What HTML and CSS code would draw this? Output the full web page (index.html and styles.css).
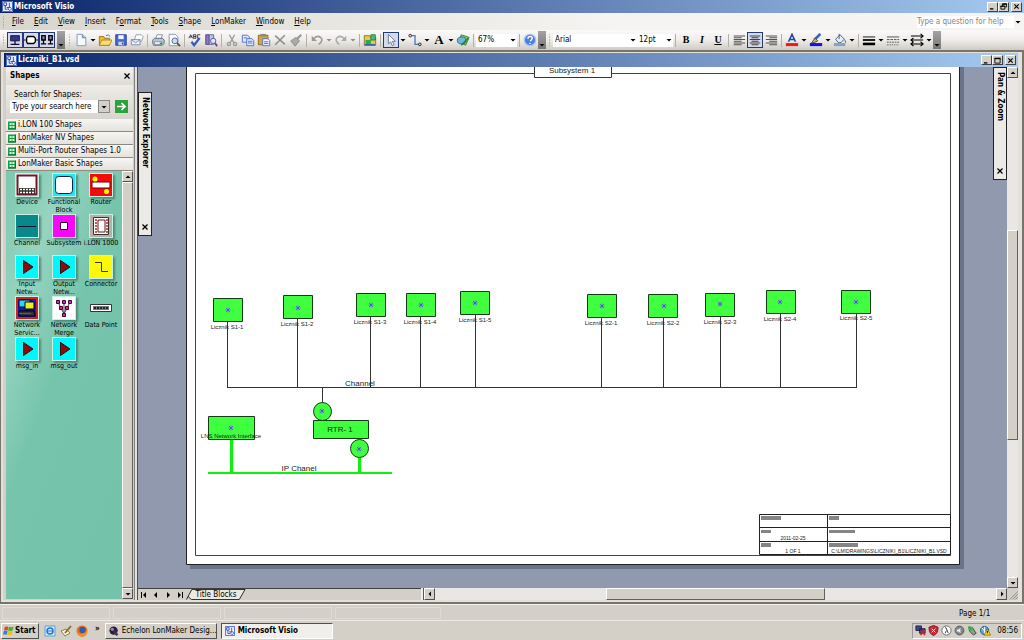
FILE: index.html
```html
<!DOCTYPE html>
<html lang="en">
<head>
<meta charset="utf-8">
<title>Microsoft Visio</title>
<link rel="stylesheet" href="styles.css">
</head>
<body>
<svg class="defs" aria-hidden="true">
  <symbol id="visio" viewBox="0 0 12 12"><rect width="12" height="12" fill="#fff"/><path d="M.5.5h11v11H.5z" fill="#e8eeff" stroke="#3458b8"/><path d="M2 2h3v3H2zM8 2v5H5M3.500 5v4H6M8.500 6.500l2 2-2 2-2-2z" fill="#fff" stroke="#1f3fae"/></symbol>
  <symbol id="down" viewBox="0 0 8 8"><path d="M1.500 3h5L4 5.500z" fill="#000"/></symbol>
  <symbol id="min" viewBox="0 0 8 8"><path d="M1 6h4v1.500H1z"/></symbol>
  <symbol id="max" viewBox="0 0 8 8"><path d="M1 1.500h6v5.500H1z" fill="none" stroke="#000"/><path d="M.5 1h7v1.500h-7z"/></symbol>
  <symbol id="restore" viewBox="0 0 8 8"><path d="M3 3V1h4.500v3.500H6M1 3.500h4.500V7H1z" fill="none" stroke="#000"/><path d="M2.500.5h5V2h-5zM.5 3h5v1.300h-5z"/></symbol>
  <symbol id="close" viewBox="0 0 8 8"><path d="M1.500 1.500l5 5M6.500 1.500l-5 5" fill="none" stroke="#000" stroke-width="1.300"/></symbol>
  <symbol id="stencil" viewBox="0 0 10 10"><rect width="10" height="10" fill="#16a044"/><path d="M2 2h2.500v2.500H2zM5.500 2H8v2.500H5.500zM2 5.500h2.500V8H2zM5.500 5.500H8V8H5.500z" fill="#d8ffe0"/><path d="M9.500 0v9.500H0" fill="none" stroke="#07602a"/></symbol>
  <symbol id="arrowblock" viewBox="0 0 22 22"><rect width="22" height="22" fill="#00f8fc"/><path d="M7.500 4v14M7.500 4.500l9.500 6.500-9.500 6.500z" fill="#900808" stroke="#201010"/></symbol>
  <symbol id="printer" viewBox="0 0 16 16"><path d="M5 7l2-5h6l-1.500 5z" fill="#fff" stroke="#7c8ca0"/><path d="M2 8l2-2h9l2 2v4l-2 2H3l-1-2z" fill="#b8c4d4" stroke="#53657c"/><path d="M4 10h8v3H4z" fill="#f8f8f8" stroke="#8090a0"/></symbol>
</svg>

<header class="titlebar">
  <svg class="appicon"><use href="#visio"/></svg>
  <h1>Microsoft Visio</h1>
  <div class="winbtns">
    <button aria-label="Minimize"><svg><use href="#min"/></svg></button><button aria-label="Restore"><svg><use href="#restore"/></svg></button><button class="apart" aria-label="Close"><svg><use href="#close"/></svg></button>
  </div>
</header>

<nav class="menubar">
  <span class="grip"></span>
  <button><u>F</u>ile</button><button><u>E</u>dit</button><button><u>V</u>iew</button><button><u>I</u>nsert</button><button>F<u>o</u>rmat</button><button><u>T</u>ools</button><button><u>S</u>hape</button><button><u>L</u>onMaker</button><button><u>W</u>indow</button><button><u>H</u>elp</button>
  <input class="ask" type="text" aria-label="Help question" placeholder="Type a question for help">
  <svg class="askarrow"><use href="#down"/></svg>
</nav>

<div class="toolbar">
  <span class="grip"></span>
  <button class="tool on" aria-label="Network"><svg viewBox="0 0 16 16"><path d="M3 3h10v6H3z" fill="#343487" stroke="#101040"/><path d="M8 9v4M3 13h10" stroke="#101030" stroke-width="1.500"/></svg></button>
  <button class="tool on" aria-label="Device"><svg viewBox="0 0 16 16"><path d="M4 4h7l2 2v4l-2 2H4l-1-2V6z" fill="#fff" stroke="#000" stroke-width="1.500"/><path d="M0 8h3M13 8h3" stroke="#000"/></svg></button>
  <button class="tool on" aria-label="Both"><svg viewBox="0 0 16 16"><path d="M2 3h4v5H2zM10 3h4v5h-4z" fill="#8088c0" stroke="#000" stroke-width="1.500"/><path d="M4 8v4M12 8v4M1 12.500h6M9 12.500h6" stroke="#000" stroke-width="1.500"/></svg></button>
  <span class="more first"><svg><use href="#down"/></svg></span>
  <span class="grip"></span>
  <button class="tool" aria-label="New"><svg viewBox="0 0 16 16"><path d="M3.500 1.500h6l4 4v9h-10z" fill="#f6faff" stroke="#7890b8"/><path d="M9.500 1.500v4h4" fill="#a8bce0" stroke="#6880b0"/></svg></button>
  <button class="drop" aria-label="New options"><svg><use href="#down"/></svg></button>
  <button class="tool" aria-label="Open"><svg viewBox="0 0 16 16"><path d="M1.500 14V4h5l1 2H13v8z" fill="#f0b838" stroke="#a07010"/><path d="M1.500 14l3-6H16l-3 6z" fill="#ffe070" stroke="#b08018"/><path d="M9 3q3-2 5 1" fill="none" stroke="#5070a0"/></svg></button>
  <button class="tool" aria-label="Save"><svg viewBox="0 0 16 16"><path d="M2 2h12v12H2z" fill="#4668d0" stroke="#233c98"/><path d="M5 2.500h6V7H5z" fill="#f4f7ff"/><path d="M5 10h6v4H5z" fill="#c8d4f4"/><path d="M9 11h1.500v2H9z" fill="#233c98"/></svg></button>
  <button class="tool" aria-label="Mail"><svg viewBox="0 0 16 16"><path d="M5 8l2-6h6l2 2-2 6z" fill="#fff" stroke="#8898b0"/><path d="M1.500 7.500h10v6h-10z" fill="#e8eefa" stroke="#7888a8"/><path d="M1.500 7.500l5 3.500 5-3.500" fill="none" stroke="#7888a8"/></svg></button>
  <span class="sep"></span>
  <button class="tool" aria-label="Print"><svg viewBox="0 0 16 16"><use href="#printer"/><path d="M10 11h3v2h-3z" fill="#30a048"/></svg></button>
  <button class="tool" aria-label="Print preview"><svg viewBox="0 0 16 16"><path d="M2.500 1.500h7l3 3v10h-10z" fill="#fff" stroke="#7890b8"/><circle cx="9" cy="9" r="3.300" fill="#c8e0ff" stroke="#506080"/><path d="M11.500 11.500L15 15" stroke="#705020" stroke-width="2"/></svg></button>
  <span class="sep"></span>
  <button class="tool" aria-label="Spelling"><svg viewBox="0 0 16 16"><path d="M1 6l2-4 2 4M2 4.500h2M6 2v4h3V2H6M6 4h3M14 2h-3v4h3" fill="none" stroke="#303030"/><path d="M4 10l3 4 6-8" fill="none" stroke="#3458c8" stroke-width="2.500"/></svg></button>
  <button class="tool" aria-label="Research"><svg viewBox="0 0 16 16"><path d="M2 2h4v11H2z" fill="#8a78c0" stroke="#504080"/><path d="M6 2h5v11H6z" fill="#b8c8e8" stroke="#506090"/><circle cx="10.500" cy="9" r="3" fill="#dceaff" stroke="#604888"/><path d="M12.500 11.500L15 15" stroke="#604888" stroke-width="2"/></svg></button>
  <span class="sep"></span>
  <button class="tool" aria-label="Cut"><svg viewBox="0 0 16 16" fill="none" stroke="#9a9a9a" stroke-width="1.500"><path d="M5 2l5 9M11 2L6 11"/><circle cx="4.500" cy="12.500" r="1.800"/><circle cx="11.500" cy="12.500" r="1.800"/></svg></button>
  <button class="tool" aria-label="Copy"><svg viewBox="0 0 16 16" fill="#e0eaff" stroke="#4a6cc0"><path d="M1.500 2.500h6l2 2v6h-8z"/><path d="M6.500 6.500h6l2 2v6h-8z"/><path d="M8 9.500h5M8 11.500h5M3 5.500h4"/></svg></button>
  <button class="tool" aria-label="Paste"><svg viewBox="0 0 16 16"><path d="M1.500 2.500h11v11h-11z" fill="#d8a438" stroke="#8a6418"/><path d="M4 1h6v3H4z" fill="#888"/><path d="M6.500 6.500h6l2 2v6h-8z" fill="#eef4ff" stroke="#4a6cc0"/><path d="M8 10h5M8 12h5" stroke="#4a6cc0"/></svg></button>
  <button class="tool" aria-label="Delete"><svg viewBox="0 0 16 16"><path d="M2.500 3l11 10M13.500 2.500l-11 11" stroke="#8c8c8c" stroke-width="1.700"/></svg></button>
  <button class="tool" aria-label="Format painter"><svg viewBox="0 0 16 16"><path d="M14 2l-5 5" stroke="#999" stroke-width="2.500"/><path d="M2 9l6-4 4 4-5 6z" fill="#aaa" stroke="#888"/></svg></button>
  <span class="sep"></span>
  <button class="tool" aria-label="Undo"><svg viewBox="0 0 16 16"><path d="M4 7q4-5 8-2t-2 8" fill="none" stroke="#999" stroke-width="1.800"/><path d="M2 3v6h6z" fill="#999"/></svg></button>
  <button class="drop dim" aria-label="Undo list"><svg><use href="#down"/></svg></button>
  <button class="tool" aria-label="Redo"><svg viewBox="0 0 16 16"><path d="M12 7Q8 2 4 5t2 8" fill="none" stroke="#aaa" stroke-width="1.800"/><path d="M14 3v6H8z" fill="#aaa"/></svg></button>
  <button class="drop dim" aria-label="Redo list"><svg><use href="#down"/></svg></button>
  <span class="sep"></span>
  <button class="tool" aria-label="Shapes"><svg viewBox="0 0 16 16"><path d="M1.500 3h6l1 2h6v9h-13z" fill="#e8c850" stroke="#8a7020"/><path d="M3 8h6v5H3z" fill="#30a850"/><path d="M9 2h5v6H9z" fill="#50c070" stroke="#207838"/><path d="M2 12.500h12v2H2z" fill="#3868b0"/></svg></button>
  <span class="sep"></span>
  <button class="tool on" aria-label="Pointer"><svg viewBox="0 0 16 16"><path d="M5 1.500v11l2.500-2.500 2 4.500 2-1-2-4H13z" fill="#fff" stroke="#607090"/></svg></button>
  <button class="drop" aria-label="Pointer options"><svg><use href="#down"/></svg></button>
  <button class="tool" aria-label="Connector"><svg viewBox="0 0 16 16" fill="none"><path d="M4 3h4v10h4" stroke="#4878c0" stroke-width="1.500"/><circle cx="2.500" cy="3" r="1.500" stroke="#111"/><circle cx="13.500" cy="13" r="1.500" stroke="#111"/></svg></button>
  <button class="drop" aria-label="Connector options"><svg><use href="#down"/></svg></button>
  <button class="tool big" aria-label="Text tool">A</button>
  <button class="drop" aria-label="Text options"><svg><use href="#down"/></svg></button>
  <button class="tool" aria-label="Drawing tools"><svg viewBox="0 0 16 16"><path d="M6 2l9 3-4 9-8-4z" fill="#80d060" stroke="#308030"/><ellipse cx="6.500" cy="8.500" rx="5" ry="4" fill="#70b8d8" stroke="#2868a0"/><path d="M6 14l8-8" stroke="#208838" stroke-width="2"/></svg></button>
  <span class="sep"></span>
  <span class="combo zoom"><select aria-label="Zoom"><option>67%</option></select><svg><use href="#down"/></svg></span>
  <span class="sep"></span>
  <button class="tool" aria-label="Help"><svg viewBox="0 0 16 16"><circle cx="8" cy="8" r="6.500" fill="#4a7ee0" stroke="#a8c4f4" stroke-width="1.500"/><path d="M5.700 6.500q0-2.500 2.500-2.500t2.300 2-2.500 3M8 11v1.500" fill="none" stroke="#fff" stroke-width="1.700"/></svg></button>
  <span class="more"><svg><use href="#down"/></svg></span>
  <span class="grip"></span>
  <span class="combo font"><select aria-label="Font"><option>Arial</option></select><svg><use href="#down"/></svg></span>
  <span class="combo size"><select aria-label="Font size"><option>12pt</option></select><svg><use href="#down"/></svg></span>
  <span class="sep"></span>
  <button class="tool serif">B</button>
  <button class="tool serif italic">I</button>
  <button class="tool serif under">U</button>
  <span class="sep"></span>
  <button class="tool" aria-label="Align left"><svg viewBox="0 0 16 16"><path d="M2 3.500h13M2 5.500h9M2 7.500h13M2 9.500h9M2 11.500h13M2 13.500h9" stroke="#555" stroke-width="1.200"/></svg></button>
  <button class="tool on" aria-label="Center"><svg viewBox="0 0 16 16"><path d="M2 3.500h12M4 5.500h8M2 7.500h12M4 9.500h8M2 11.500h12M4 13.500h8" stroke="#444" stroke-width="1.200"/></svg></button>
  <button class="tool" aria-label="Align right"><svg viewBox="0 0 16 16"><path d="M2 3.500h13M6 5.500h9M2 7.500h13M6 9.500h9M2 11.500h13M6 13.500h9" stroke="#555" stroke-width="1.200"/></svg></button>
  <span class="sep"></span>
  <button class="tool" aria-label="Text color"><svg viewBox="0 0 16 16"><path d="M4 10l4-8.500L12 10M5.500 7.500h5" fill="none" stroke="#24489c" stroke-width="1.800"/><path d="M1 11.500h14V15H1z" fill="#f01818"/></svg></button>
  <button class="drop" aria-label="Text colors"><svg><use href="#down"/></svg></button>
  <button class="tool" aria-label="Line color"><svg viewBox="0 0 16 16"><path d="M13 1L6 8" stroke="#3b62b8" stroke-width="3"/><path d="M7 6l3 3-4 2H3z" fill="#d8b060" stroke="#445"/><path d="M1 11.500h14V15H1z" fill="#1010f0"/></svg></button>
  <button class="drop" aria-label="Line colors"><svg><use href="#down"/></svg></button>
  <button class="tool" aria-label="Fill color"><svg viewBox="0 0 16 16"><path d="M3 7l5-5 5 5-4 4H6z" fill="#e8eef8" stroke="#405078"/><path d="M7 1v6" stroke="#405078"/><path d="M13 7q3 2 1 5z" fill="#3868c0"/><path d="M1 11.500h13V15H1z" fill="#88a0c4"/></svg></button>
  <button class="drop" aria-label="Fill colors"><svg><use href="#down"/></svg></button>
  <span class="sep"></span>
  <button class="tool" aria-label="Line weight"><svg viewBox="0 0 16 16"><path d="M1 4.500h14" stroke="#000"/><path d="M1 8h14" stroke="#000" stroke-width="2"/><path d="M1 12.500h14" stroke="#000" stroke-width="3"/></svg></button>
  <button class="drop" aria-label="Line weights"><svg><use href="#down"/></svg></button>
  <button class="tool" aria-label="Line pattern"><svg viewBox="0 0 16 16" stroke="#444"><path d="M1 4.500h14"/><path d="M1 7.500h14" stroke-dasharray="3 1"/><path d="M1 10.500h14" stroke-dasharray="2 1"/><path d="M1 13.500h14" stroke-dasharray="1 1"/></svg></button>
  <button class="drop" aria-label="Line patterns"><svg><use href="#down"/></svg></button>
  <button class="tool" aria-label="Line ends"><svg viewBox="0 0 16 16" fill="none" stroke="#000" stroke-width="1.200"><path d="M1 3.500h14M12 1l3 2.500L12 6M1 8h14M4 5.500L1 8l3 2.500M1 12.500h14M12 10l3 2.500-3 2.500M4 10l-3 2.500L4 15"/></svg></button>
  <button class="drop" aria-label="Line end options"><svg><use href="#down"/></svg></button>
  <span class="more"><svg><use href="#down"/></svg></span>
</div>

<section class="mdi">
  <header class="titlebar doc">
    <svg class="appicon"><use href="#visio"/></svg>
    <h2>Liczniki_B1.vsd</h2>
    <div class="winbtns">
      <button aria-label="Minimize document"><svg><use href="#min"/></svg></button><button aria-label="Maximize document"><svg><use href="#max"/></svg></button><button class="apart" aria-label="Close document"><svg><use href="#close"/></svg></button>
    </div>
  </header>
  <div class="work">
    <aside class="shapes">
      <div class="panelhead"><h3>Shapes</h3><button aria-label="Close shapes"><svg><use href="#close"/></svg></button></div>
      <div class="search">
        <label for="q">Search for Shapes:</label>
        <div class="searchrow">
          <input id="q" type="text" value="Type your search here">
          <button class="raised" aria-label="Recent searches"><svg><use href="#down"/></svg></button>
          <button class="go" aria-label="Search"><svg viewBox="0 0 13 13"><path d="M2 6.500h8M6.500 3L10 6.500 6.500 10" fill="none" stroke="#fff" stroke-width="1.700"/></svg></button>
        </div>
      </div>
      <button class="stencil"><svg><use href="#stencil"/></svg>i.LON 100 Shapes</button>
      <button class="stencil"><svg><use href="#stencil"/></svg>LonMaker NV Shapes</button>
      <button class="stencil"><svg><use href="#stencil"/></svg>Multi-Port Router Shapes 1.0</button>
      <button class="stencil"><svg><use href="#stencil"/></svg>LonMaker Basic Shapes</button>
      <div class="palette">
        <div class="masters">
          <figure><svg viewBox="0 0 22 22"><rect width="22" height="22" fill="#fff"/><path d="M1.500 1.500h19v19h-19z" fill="#fff" stroke="#701828" stroke-width="2"/><path d="M3 14h16v6H3z" fill="#333"/><path d="M4 15.500h14M4 18.500h14" stroke="#fff" stroke-width="1.500" stroke-dasharray="2 1"/></svg><figcaption>Device</figcaption></figure>
          <figure><svg viewBox="0 0 22 22"><rect width="22" height="22" fill="#20e8f0"/><rect x="2.500" y="2.500" width="17" height="17" rx="3" fill="#fff" stroke="#102040"/></svg><figcaption>Functional Block</figcaption></figure>
          <figure><svg viewBox="0 0 22 22"><rect width="22" height="22" fill="#f80808"/><path d="M2 8h18v6H2z" fill="#fff" stroke="#600"/><circle cx="5" cy="5" r="2.500" fill="#ff0"/><circle cx="16.500" cy="17.500" r="2.500" fill="#ff0"/></svg><figcaption>Router</figcaption></figure>
          <figure><svg viewBox="0 0 22 22"><rect width="22" height="22" fill="#088888"/><path d="M2 11.500h18" stroke="#013"/></svg><figcaption>Channel</figcaption></figure>
          <figure><svg viewBox="0 0 22 22"><rect width="22" height="22" fill="#f808f8"/><path d="M7.500 7.500h7v7h-7z" fill="#fff" stroke="#202"/></svg><figcaption>Subsystem</figcaption></figure>
          <figure><svg viewBox="0 0 22 22"><rect width="22" height="22" fill="#b8b0a4"/><path d="M3.500 2.500h15v17h-15z" fill="#fff" stroke="#333"/><path d="M6 4v14M17 4v14" stroke="#c02020" stroke-dasharray="2 1" stroke-width="1.500"/><path d="M8 5h7v12H8z" fill="#fff" stroke="#502020"/></svg><figcaption>i.LON 1000</figcaption></figure>
          <figure><svg><use href="#arrowblock"/></svg><figcaption>Input Netw...</figcaption></figure>
          <figure><svg><use href="#arrowblock"/></svg><figcaption>Output Netw...</figcaption></figure>
          <figure><svg viewBox="0 0 22 22"><rect width="22" height="22" fill="#fcf808"/><path d="M5 6.500h6.500v9H18" fill="none" stroke="#332"/></svg><figcaption>Connector</figcaption></figure>
          <figure><svg viewBox="0 0 22 22"><path d="M1 1h20v20H1z" fill="#1818a0" stroke="#d02020" stroke-width="2"/><path d="M3 3h11v7H3z" fill="#28d8e8" stroke="#003"/><path d="M9 5h9v7H9z" fill="#e8f020" stroke="#003"/><path d="M3 14h15l1 5H3z" fill="#333" stroke="#000"/><path d="M3 16.500h12" stroke="#c03030"/></svg><figcaption>Network Servic...</figcaption></figure>
          <figure><svg viewBox="0 0 22 22"><rect width="22" height="22" fill="#fff"/><path d="M5 5l6 12 6-12M11 5v12" stroke="#333" fill="none"/><g fill="#d020d0" stroke="#402"><path d="M3.500 3.500h3v3h-3zM9.500 3.500h3v3h-3zM15.500 3.500h3v3h-3zM6.500 9.500h3v3h-3zM12.500 9.500h3v3h-3zM9.500 16.500h3v3h-3z"/></g></svg><figcaption>Network Merge</figcaption></figure>
          <figure><svg viewBox="0 0 22 22" class="flat"><path d="M.5 7.500h21v7H.5z" fill="#fff" stroke="#333"/><path d="M3 9h16v4H3z" fill="#777"/><path d="M4 11h14" stroke="#222" stroke-width="2" stroke-dasharray="2 1"/></svg><figcaption>Data Point</figcaption></figure>
          <figure><svg><use href="#arrowblock"/></svg><figcaption>msg_in</figcaption></figure>
          <figure><svg><use href="#arrowblock"/></svg><figcaption>msg_out</figcaption></figure>
        </div>
        <div class="vscroll"><button class="raised" aria-label="Scroll shapes up"><svg class="up"><use href="#down"/></svg></button><span class="thumb"></span><button class="raised" aria-label="Scroll shapes down"><svg><use href="#down"/></svg></button></div>
      </div>
    </aside>

    <main class="drawing">
      <div class="viewrow">
        <div class="canvas">
          <svg class="page" width="869" height="521" viewBox="138 67 869 521">
            <path d="M190 67h774v502H190z" fill="#697389"/>
            <path d="M186 67h773v497H186z" fill="#fff"/>
            <path d="M186.500 67v497.500h773V67" fill="none" stroke="#222"/>
            <path d="M195.500 73.500h755v482h-755z" fill="none" stroke="#444"/>
            <path d="M534.500 60h77v17.500h-77z" fill="#fff" stroke="#333"/>
            <text x="572" y="73" class="t8">Subsystem 1</text>
            <g fill="none" stroke="#333">
              <path d="M227.500 321v67M297.500 318v70M370.500 315.500v72.500M420.500 315.500v72.500M475.500 314v74M601.500 317v71M663.500 317v71M720.500 315v73M780.500 313v75M856.500 313v75M227 387.500h630M322.500 388v15"/>
            </g>
            <path d="M231.500 439v34M359.500 457v16" stroke="#0df20d" stroke-width="3"/>
            <path d="M208 473h184" stroke="#0df20d" stroke-width="2"/>
            <g fill="#3fff3f" stroke="#143c14">
              <path d="M213.500 298.500h29v23h-29zM283.500 295.500h29v23h-29zM356.500 293.500h29v23h-29zM406.500 293.500h29v23h-29zM460.500 291.500h29v23h-29zM587.500 294.500h29v23h-29zM648.500 294.500h29v23h-29zM705.500 293.500h29v23h-29zM766.500 290.500h29v23h-29zM841.500 290.500h29v23h-29zM208.500 416.500h46v23h-46zM313.500 420.500h55v18h-55z"/>
              <circle cx="322.500" cy="411.500" r="9"/><circle cx="359.500" cy="448.500" r="9"/>
            </g>
            <defs><g id="pt"><circle r="2" fill="#8fd0c8" stroke="#5878d0" stroke-width=".7"/><path d="M-1.500-1.500l3 3M1.500-1.500l-3 3" stroke="#2848b0" stroke-width=".8"/></g></defs>
            <use href="#pt" x="228" y="310"/><use href="#pt" x="298" y="308"/><use href="#pt" x="371" y="305"/><use href="#pt" x="421" y="305"/><use href="#pt" x="475" y="303"/><use href="#pt" x="602" y="306"/><use href="#pt" x="664" y="306"/><use href="#pt" x="720" y="304"/><use href="#pt" x="780" y="302"/><use href="#pt" x="856" y="302"/><use href="#pt" x="231" y="428"/><use href="#pt" x="322" y="411"/><use href="#pt" x="359" y="449"/>
            <g class="t6">
              <text x="227" y="329">Licznik S1-1</text><text x="297" y="326">Licznik S1-2</text><text x="370" y="324">Licznik S1-3</text><text x="420" y="324">Licznik S1-4</text><text x="475" y="322">Licznik S1-5</text>
              <text x="601" y="325">Licznik S2-1</text><text x="663" y="325">Licznik S2-2</text><text x="720" y="324">Licznik S2-3</text><text x="780" y="321">Licznik S2-4</text><text x="856" y="320">Licznik S2-5</text>
              <text x="231" y="438">LNS Network Interface</text>
            </g>
            <text x="360" y="386" class="t8">Channel</text><text x="340" y="432" class="t8">RTR- 1</text><text x="299" y="471" class="t8">IP Chanel</text>
            <path d="M759.500 514.500h191v40h-191zM759.500 527.500h191M759.500 541.500h191M827.500 514.500v40" fill="none" stroke="#222"/>
            <path d="M761 516h20v4h-20zM829 516h10v4h-10zM761 530h10v3h-10zM829 530h26v3h-26zM761 543h10v4h-10zM829 543h29v4h-29z" fill="#858585"/>
            <g class="t5"><text x="793" y="540">2011-02-25</text><text x="793" y="553">1 OF 1</text><text x="889" y="553">C:\LM\DRAWINGS\LICZNIKI_B1\LICZNIKI_B1.VSD</text></g>
          </svg>
          <div class="dock left"><span>Network Explorer</span><button aria-label="Close Network Explorer"><svg><use href="#close"/></svg></button></div>
          <div class="dock right"><span>Pan &amp; Zoom</span><button aria-label="Close Pan and Zoom"><svg><use href="#close"/></svg></button></div>
        </div>
        <div class="vscroll page-v"><button class="raised" aria-label="Scroll up"><svg class="up"><use href="#down"/></svg></button><span class="thumb"></span><button class="raised" aria-label="Scroll down"><svg><use href="#down"/></svg></button></div>
      </div>
      <div class="tabrow">
        <div class="tabs">
          <button aria-label="First page"><svg viewBox="0 0 8 8"><path d="M1 1h1v6H1zM6 1v6L3 4z"/></svg></button>
          <button aria-label="Previous page"><svg viewBox="0 0 8 8"><path d="M5 1v6L2 4z"/></svg></button>
          <button aria-label="Next page"><svg viewBox="0 0 8 8"><path d="M3 1v6l3-3z"/></svg></button>
          <button aria-label="Last page"><svg viewBox="0 0 8 8"><path d="M2 1v6l3-3zM6 1h1v6H6z"/></svg></button>
          <button class="tab"><svg viewBox="0 0 62 12" preserveAspectRatio="none"><path d="M.5 11.500L6 .5h55l-6 11H5.500L2 8" fill="#ece9e3" stroke="#222"/></svg><span>Title Blocks</span></button>
        </div>
        <span class="splitter"></span>
        <div class="hscroll"><button class="raised" aria-label="Scroll left"><svg viewBox="0 0 8 8"><path d="M5 1.500v5L2.500 4z"/></svg></button><span class="thumb"></span><button class="raised" aria-label="Scroll right"><svg viewBox="0 0 8 8"><path d="M3 1.500v5L5.500 4z"/></svg></button></div>
        <svg class="sizer" viewBox="0 0 12 12"><path d="M3 12l9-9M6 12l6-6M9 12l3-3" stroke="#888"/></svg>
      </div>
    </main>
  </div>
</section>

<div class="status"><span></span><span></span><span></span><span class="rest"></span><output>Page 1/1</output></div>

<footer class="taskbar">
  <button class="start raised"><svg viewBox="0 0 12 12"><path d="M2 2q2-1 4 0L5 6Q3 5 1 6z" fill="#e84820"/><path d="M6.500 2q2 1 5 0l-1 4q-3 1-5 0z" fill="#48b030"/><path d="M1 6.500q2-1 4 0l-1 4q-2-1-4 0z" fill="#3878e0"/><path d="M5.500 6.500q2 1 5 0l-1 4q-3 1-5 0z" fill="#f0c010"/></svg>Start</button>
  <div class="quick">
    <button aria-label="Internet Explorer"><svg viewBox="0 0 12 12"><path d="M1 1h10v10H1z" fill="#d4ecff" stroke="#60a0d8"/><circle cx="6" cy="6" r="3" fill="none" stroke="#2878c8" stroke-width="1.600"/><path d="M3 6h6" stroke="#2878c8"/></svg></button>
    <button aria-label="Show desktop"><svg viewBox="0 0 12 12"><path d="M1 6l5-2 4 4-5 3z" fill="#f8f4d0" stroke="#908040"/><path d="M11 1L5 8" stroke="#806820" stroke-width="1.700"/></svg></button>
    <button aria-label="Firefox"><svg viewBox="0 0 12 12"><circle cx="6" cy="6" r="5.500" fill="#e07018"/><circle cx="6.500" cy="5" r="3.200" fill="#3858b0"/><path d="M1 3q0 6 5 6 4-1 5-5 1 7-5 8Q0 11 1 3z" fill="#f09020"/></svg></button>
  </div>
  <span class="chev">»</span>
  <button class="task raised"><svg viewBox="0 0 12 12"><circle cx="5.500" cy="5.500" r="5" fill="#282038"/><circle cx="4" cy="4" r="2" fill="#a080c0"/><path d="M6 6l4 5" stroke="#403060" stroke-width="3"/></svg>Echelon LonMaker Desig...</button>
  <button class="task active"><svg><use href="#visio"/></svg>Microsoft Visio</button>
  <div class="tray">
    <svg viewBox="0 0 12 12"><path d="M1 1h6v5H1zM5 4h6v5H5z" fill="#3848a0" stroke="#223"/><path d="M6 6l5 5M11 6l-5 5" stroke="#e02020" stroke-width="1.600"/></svg>
    <svg viewBox="0 0 12 12"><path d="M6 .5l5 2q0 7-5 9-5-2-5-9z" fill="#d02838" stroke="#801020"/><path d="M4 4l4 4M8 4L4 8" stroke="#fff"/></svg>
    <svg viewBox="0 0 12 12"><circle cx="6" cy="6" r="5" fill="#fff" stroke="#666"/><path d="M4.500 3h1l2.500 6M6 6L4.500 9" fill="none" stroke="#333"/></svg>
    <svg viewBox="0 0 12 12"><circle cx="6" cy="6" r="4.800" fill="#808890" stroke="#555"/><path d="M3 5h2l2-2v6L5 7H3z" fill="#eee"/></svg>
    <svg viewBox="0 0 12 12"><path d="M2 2l4 1 4 6-3 2-4-4z" fill="#90a090" stroke="#444"/><path d="M1 2h5v4H2z" fill="#30b840"/></svg>
    <svg viewBox="0 0 12 12"><circle cx="5" cy="6" r="4.500" fill="#60a8d8" stroke="#205890"/><path d="M2 3l5 6M5 2v8" stroke="#fff"/><path d="M8 4l3.500 7h-7z" fill="#f8e020" stroke="#665500" stroke-width=".7"/><path d="M8 6.500V9" stroke="#000"/></svg>
    <time>08:56</time>
  </div>
</footer>
</body>
</html>
```
FILE: styles.css
```css
* { box-sizing: border-box; }
body {
  margin: 0; height: 100vh; display: flex; flex-direction: column; overflow: hidden;
  background: #d4d0c8; color: #000;
  font: 8px/10px "DejaVu Sans Condensed", "DejaVu Sans", sans-serif;
}
button, input, select { font: inherit; color: inherit; margin: 0; padding: 0; border: 0; border-radius: 0; background: none; }
h1, h2, h3, figure { margin: 0; font-size: inherit; }
svg { display: block; flex: none; }
.defs { position: absolute; width: 0; height: 0; }

.titlebar { flex: none; height: 13px; display: flex; align-items: center; gap: 1px; padding: 0 2px; color: #fff; background: linear-gradient(to right, #0a246a, #a6caf0); }
.titlebar h1, .titlebar h2 { flex: 1; font-weight: bold; }
.appicon { width: 11px; height: 11px; }
.winbtns { display: flex; }
.winbtns button { width: 11px; height: 10px; display: grid; place-items: center; background: #d4d0c8; border: 1px solid; border-color: #fff #404040 #404040 #fff; }
.winbtns svg { width: 7px; height: 7px; }
.winbtns .apart { margin-left: 2px; }

.menubar { flex: none; height: 17px; display: flex; align-items: center; background: linear-gradient(to right, #d8d5cd, #f5f4f2 60%); padding-right: 2px; }
.menubar button { padding: 0 5px; }
.grip { width: 7px; height: 12px; flex: none; background: radial-gradient(circle, #8d8a80 1px, transparent 1px) center / 3px 3px repeat-y; }
.ask { margin-left: auto; width: 97px; height: 12px; background: #fff; padding: 0; }
.ask::placeholder { color: #858585; opacity: 1; }
.askarrow { width: 8px; height: 8px; }

.toolbar { flex: none; height: 20px; display: flex; align-items: center; background: linear-gradient(#fbfaf9, #efedea 50%, #cfcbc3); }
.tool { width: 16px; height: 16px; flex: none; display: grid; place-items: center; }
.tool svg { width: 14px; height: 14px; }
.tool.on { border: 1px solid #26387c; background: #d6daea; }
.tool.serif, .tool.big { font: bold 10px/12px "Liberation Serif", serif; }
.tool.big { font-size: 13px; }
.tool.italic { font-style: italic; }
.tool.under { text-decoration: underline; }
.drop { width: 8px; height: 16px; flex: none; }
.drop svg, .more svg { width: 8px; height: 8px; }
.dim { opacity: .4; }
.sep { width: 5px; height: 13px; flex: none; background: linear-gradient(#b3b0a8, #b3b0a8) center / 1px 100% no-repeat; }
.more { width: 8px; height: 18px; flex: none; display: flex; align-items: flex-end; background: linear-gradient(#a3a3a3, #777); }
.more.first { margin: 0 1px 0 2px; }
.combo { display: flex; align-items: center; height: 13px; background: #fff; flex: none; }
.combo select { flex: 1; min-width: 0; height: 13px; appearance: none; padding-left: 2px; }
.combo svg { width: 8px; height: 8px; }
.zoom { width: 41px; }
.font { width: 84px; }
.size { width: 36px; }

.mdi { flex: 1; min-height: 0; display: flex; flex-direction: column; padding: 1px 4px 2px 2px; border: solid #77746c; border-width: 2px 2px 2px 1px; background: #e4e1da; }
.doc { height: 14px; margin-left: 1px; }
.work { flex: 1; min-height: 0; display: flex; gap: 2px; }
.raised { display: grid; place-items: center; background: #d4d0c8; border: 1px solid; border-color: #fff #505050 #505050 #fff; }
.raised svg { width: 8px; height: 8px; }

.shapes { width: 132px; flex: none; display: flex; flex-direction: column; padding: 0 1px 1px 3px; background: #d4d0c8; border-right: 1px solid #808080; }
.panelhead { height: 18px; flex: none; display: flex; align-items: center; justify-content: space-between; padding: 0 2px 0 4px; background: linear-gradient(#f3f1ee, #dedbd5); }
.panelhead svg { width: 8px; height: 8px; }
.search { height: 34px; flex: none; padding: 5px 5px 0 4px; background: linear-gradient(#eeece8, #d8d5ce); }
.search label { display: block; padding-left: 4px; }
.searchrow { display: flex; align-items: center; }
.searchrow input { flex: 1; min-width: 0; height: 13px; background: #fff; padding: 0 2px; }
.searchrow .raised { width: 12px; height: 13px; border-color: #888; }
.go { width: 13px; height: 13px; margin-left: 5px; background: #2ca33a; }
.stencil { height: 13px; flex: none; display: flex; align-items: center; gap: 2px; padding: 0 2px; text-align: left; white-space: nowrap; background: linear-gradient(#f7f6f4, #e4e2dc); border-bottom: 1px solid #8c8981; }
.stencil svg { width: 8px; height: 9px; }
.palette { flex: 1; min-height: 0; display: flex; }
.masters { flex: 1; display: grid; grid-template-columns: repeat(3, 37px); grid-auto-rows: 41px; align-content: start; justify-content: center; padding-top: 2px; background: linear-gradient(110deg, #7cc8b0, #96d4c0 22%, #76c4ac 45%, #74c2aa); }
figure { display: flex; flex-direction: column; align-items: center; gap: 1px; }
figure svg { width: 24px; height: 24px; border: 1px solid #c8f0e4; box-shadow: 2px 2px 2px #4f8c7a; }
figure .flat { border-color: transparent; box-shadow: none; }
figcaption { font-size: 7px; line-height: 8px; text-align: center; }
.vscroll { width: 11px; flex: none; display: flex; flex-direction: column; background: #e9e7e3; }
.vscroll button { height: 11px; }
.up { transform: rotate(180deg); }
.thumb { background: #d4d0c8; border: 1px solid; border-color: #fff #606060 #606060 #fff; }
.palette .thumb { flex: 1; }

.drawing { flex: 1; min-width: 0; display: flex; flex-direction: column; border-left: 1px solid #505050; }
.viewrow { flex: 1; min-height: 0; display: flex; }
.canvas { flex: 1; position: relative; overflow: hidden; background: #9099ae; }
.page { font-family: "Liberation Sans", sans-serif; text-anchor: middle; fill: #222; }
.t8 { font-size: 8px; }
.t6 { font-size: 6px; }
.t5 { font-size: 5px; }
.dock { position: absolute; width: 14px; display: flex; flex-direction: column; align-items: center; justify-content: space-between; padding: 4px 0; background: #eceae6; border: 1px solid #222; font-weight: bold; }
.dock span { writing-mode: vertical-rl; }
.dock svg { width: 8px; height: 8px; }
.left { left: 0; top: 25px; height: 144px; }
.right { right: 0; top: 0; height: 113px; }
.page-v .thumb { height: 210px; margin-top: 152px; }
.page-v button:last-child { margin-top: auto; }

.tabrow { height: 12px; flex: none; display: flex; background: #d4d0c8; }
.tabs { flex: 0 1 283px; display: flex; border-top: 1px solid #404040; }
.tabs button { width: 12px; display: grid; place-items: center; }
.tabs button svg { width: 8px; height: 8px; }
.tabs .tab { width: 60px; }
.tabs .tab svg, .tabs .tab span { grid-area: 1 / 1; }
.tabs .tab svg { width: 60px; height: 11px; }
.splitter { width: 3px; background: #eee; border-right: 1px solid #555; }
.hscroll { flex: 1; display: flex; background: #e9e7e3; }
.hscroll button { width: 11px; flex: none; }
.hscroll .thumb { flex: 0 1 219px; margin-left: 171px; margin-right: auto; }
.sizer { width: 11px; height: 12px; }

.status { height: 17px; flex: none; display: flex; align-items: center; gap: 3px; padding: 0 9px 0 2px; border-top: 1px solid #f4f3f0; border-bottom: 1px solid #eceae5; }
.status span { width: 108px; height: 12px; border: 1px solid #dedbd5; }
.status .rest { width: 106px; }
.status output { margin-left: auto; width: 72px; padding: 2px 0 0 16px; }

.taskbar { height: 19px; flex: none; display: flex; align-items: center; padding: 0 2px 0 1px; gap: 4px; }
.start { display: flex; align-items: center; gap: 1px; width: 38px; height: 16px; font-weight: bold; padding-left: 1px; }
.start svg { width: 11px; height: 11px; }
.quick { display: flex; gap: 4px; margin-left: 1px; }
.quick svg { width: 12px; height: 12px; }
.chev { font-weight: bold; margin: 0 1px 4px 3px; }
.task { width: 112px; height: 16px; display: flex; align-items: center; gap: 3px; padding: 0 3px; text-align: left; white-space: nowrap; }
.task svg { width: 10px; height: 10px; }
.active { background: #f1efeb; border: 1px solid; border-color: #505050 #fff #fff #505050; font-weight: bold; }
.tray { margin-left: auto; height: 16px; display: flex; align-items: center; gap: 2px; padding: 0 3px 0 2px; border: 1px solid; border-color: #999 #fff #fff #999; }
.tray svg { width: 11px; height: 11px; }
.tray time { margin-left: 4px; }
```
